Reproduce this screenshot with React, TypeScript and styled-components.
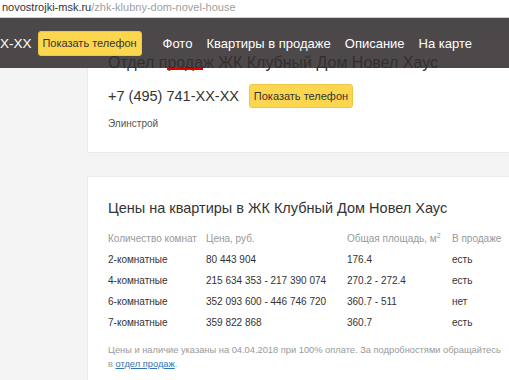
import React from "react";
import styled, { createGlobalStyle } from "styled-components";

const Global = createGlobalStyle`
  html, body { margin: 0; padding: 0; }
  body {
    background: #f4f4f4;
    font-family: "Liberation Sans", Arial, sans-serif;
    overflow: hidden;
    width: 509px;
    height: 380px;
  }
`;

const AddressBar = styled.div`
  height: 17px;
  background: #ffffff;
  border-bottom: 1px solid #cfcfcf;
  padding-left: 2px;
  font-size: 11px;
  line-height: 14px;
  white-space: nowrap;
`;

const Domain = styled.span`
  color: #333333;
`;

const Path = styled.span`
  color: #a0a0a0;
`;

const Viewport = styled.div`
  position: relative;
`;

const TopBar = styled.div`
  position: absolute;
  top: 0;
  left: 0;
  right: 0;
  height: 50px;
  background: rgba(50, 46, 47, 0.87);
  display: flex;
  align-items: center;
  z-index: 2;
  white-space: nowrap;
`;

const PhoneTail = styled.span`
  color: #ffffff;
  font-size: 13.5px;
`;

const YellowButton = styled.button<{ $inHeader?: boolean }>`
  height: ${(p) => (p.$inHeader ? 25 : 24)}px;
  width: 104px;
  margin-left: ${(p) => (p.$inHeader ? 6 : 0)}px;
  padding: 0;
  background: #fdd64f;
  border: 1px solid #ecc647;
  border-radius: 3px;
  color: #333333;
  font-family: "Liberation Sans", Arial, sans-serif;
  font-size: 11px;
  cursor: pointer;
`;

const Nav = styled.nav`
  display: flex;
  gap: 14px;
  margin-left: 21px;
`;

const NavLink = styled.a`
  color: #ffffff;
  font-size: 13px;
  text-decoration: none;
`;

const Main = styled.main`
  padding: 22px 0 0 87px;
  display: flex;
  flex-direction: column;
  gap: 23px;
`;

const Card = styled.section<{ $top: number }>`
  background: #ffffff;
  border: 1px solid #ebebeb;
  border-right: none;
  padding: ${(p) => p.$top}px 0 21px 20px;
`;

const Title = styled.h2<{ $size: number }>`
  margin: 0;
  font-size: ${(p) => p.$size}px;
  line-height: 22px;
  font-weight: normal;
  color: #333333;
  white-space: nowrap;
`;

const Marked = styled.span`
  position: relative;
  &::after {
    content: "";
    position: absolute;
    left: 0;
    right: 0;
    bottom: 1px;
    height: 2px;
    background: #e00000;
    z-index: 3;
  }
`;

const PhoneRow = styled.div`
  display: flex;
  align-items: center;
  gap: 10px;
  margin-top: 10px;
`;

const Phone = styled.span`
  font-size: 14.5px;
  color: #333333;
`;

const Company = styled.div`
  margin-top: 9px;
  font-size: 10px;
  line-height: 14px;
  color: #555555;
`;

const PriceTable = styled.div`
  margin-top: 9px;
  display: grid;
  grid-template-columns: 98px 141px 105px auto;
  grid-auto-rows: 21px;
  align-items: center;
  font-size: 10px;
  white-space: nowrap;
`;

const Cell = styled.div<{ $head?: boolean }>`
  color: ${(p) => (p.$head ? "#999999" : "#333333")};
`;

const Sup = styled.sup`
  font-size: 7px;
`;

const Note = styled.div`
  margin-top: 10px;
  font-size: 9.3px;
  line-height: 14px;
  color: #999999;
`;

const NoteLine = styled.div`
  white-space: nowrap;
`;

const NoteLink = styled.a`
  color: #2f76b5;
  text-decoration: underline;
`;

const rows = [
  ["2-комнатные", "80 443 904", "176.4", "есть"],
  ["4-комнатные", "215 634 353 - 217 390 074", "270.2 - 272.4", "есть"],
  ["6-комнатные", "352 093 600 - 446 746 720", "360.7 - 511", "нет"],
  ["7-комнатные", "359 822 868", "360.7", "есть"],
];

export default function App() {
  return (
    <>
      <Global />
      <AddressBar>
        <Domain>novostrojki-msk.ru</Domain>
        <Path>/zhk-klubny-dom-novel-house</Path>
      </AddressBar>
      <Viewport>
        <TopBar>
          <PhoneTail>X-XX</PhoneTail>
          <YellowButton $inHeader>Показать телефон</YellowButton>
          <Nav>
            <NavLink>Фото</NavLink>
            <NavLink>Квартиры в продаже</NavLink>
            <NavLink>Описание</NavLink>
            <NavLink>На карте</NavLink>
          </Nav>
        </TopBar>
        <Main>
          <Card $top={11}>
            <Title $size={16}>
              Отдел п<Marked>рода</Marked>ж ЖК Клубный Дом Новел Хаус
            </Title>
            <PhoneRow>
              <Phone>+7 (495) 741-XX-XX</Phone>
              <YellowButton>Показать телефон</YellowButton>
            </PhoneRow>
            <Company>Элинстрой</Company>
          </Card>
          <Card $top={20}>
            <Title $size={14.5}>Цены на квартиры в ЖК Клубный Дом Новел Хаус</Title>
            <PriceTable>
              <Cell $head>Количество комнат</Cell>
              <Cell $head>Цена, руб.</Cell>
              <Cell $head>
                Общая площадь, м<Sup>2</Sup>
              </Cell>
              <Cell $head>В продаже</Cell>
              {rows.map((r) =>
                r.map((c, i) => <Cell key={r[0] + i}>{c}</Cell>)
              )}
            </PriceTable>
            <Note>
              <NoteLine>
                Цены и наличие указаны на 04.04.2018 при 100% оплате. За подробностями обращайтесь
              </NoteLine>
              <NoteLine>
                в <NoteLink>отдел продаж</NoteLink>.
              </NoteLine>
            </Note>
          </Card>
        </Main>
      </Viewport>
    </>
  );
}
